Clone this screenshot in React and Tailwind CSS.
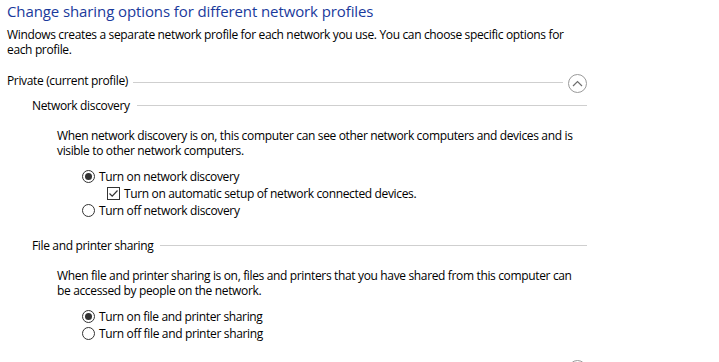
import React from 'react';

const FONT = "font-['Segoe_UI','Open_Sans',sans-serif]";
const BODY = 'whitespace-nowrap text-[12px] leading-[15px] tracking-[-0.35px] text-black';

function Radio({ checked, label }) {
  return (
    <div className="flex h-[17px] items-center">
      <span className="flex h-[13px] w-[13px] items-center justify-center rounded-full border border-[#333333] bg-white">
        {checked && <span className="h-[7px] w-[7px] rounded-full bg-[#333333]" />}
      </span>
      <span className={`ml-[4px] ${BODY}`}>{label}</span>
    </div>
  );
}

function Checkbox({ checked, label }) {
  return (
    <div className="flex h-[17px] items-center pl-[25px]">
      <span className="flex h-[13px] w-[13px] items-center justify-center border border-[#333333] bg-white">
        {checked && (
          <svg width="11" height="11" viewBox="0 0 11 11" fill="none">
            <path d="M1.5 5.5 L4.2 8.2 L9.5 2.5" stroke="#333333" strokeWidth="1.2" />
          </svg>
        )}
      </span>
      <span className={`ml-[4px] ${BODY}`}>{label}</span>
    </div>
  );
}

function ToggleCircle({ up }) {
  return (
    <span className="mt-[1px] flex h-[19px] w-[19px] shrink-0 items-center justify-center rounded-full border border-[#9a9a9a]">
      <svg width="11" height="7" viewBox="0 0 11 7" fill="none">
        <path
          d={up ? 'M1 6 L5.5 1.5 L10 6' : 'M1 1 L5.5 5.5 L10 1'}
          stroke="#6e6e6e"
          strokeWidth="1.2"
        />
      </svg>
    </span>
  );
}

function ProfileHeader({ title, up, textClass = '' }) {
  return (
    <div className="flex items-start">
      <span className={`${BODY} ${textClass}`}>{title}</span>
      <div className="mx-[5px] mt-[9px] h-px flex-1 bg-[#cfcfcf]" />
      <ToggleCircle up={up} />
    </div>
  );
}

function SectionHeader({ title }) {
  return (
    <div className="flex items-start pl-[25px]">
      <span className={BODY}>{title}</span>
      <div className="ml-[7px] mt-[7px] h-px flex-1 bg-[#cfcfcf]" />
    </div>
  );
}

export default function App() {
  return (
    <div className={`h-[362px] w-[719px] overflow-hidden bg-white pl-[7px] ${FONT}`}>
      <div className="w-[580px]">
        {/* Page title */}
        <h1 className="mt-[1px] whitespace-nowrap text-[15px] font-normal leading-[20px] tracking-[-0.1px] text-[#1a3a9c]">
          Change sharing options for different network profiles
        </h1>
        <p className={`mt-[6px] ${BODY}`}>
          Windows creates a separate network profile for each network you use. You can choose specific options for
          <br />
          each profile.
        </p>

        {/* Private profile */}
        <div className="mt-[16px]">
          <ProfileHeader title="Private (current profile)" up />
        </div>

        <div className="mt-[5px]">
          <SectionHeader title="Network discovery" />
          <p className={`mt-[15px] pl-[50px] ${BODY}`}>
            When network discovery is on, this computer can see other network computers and devices and is
            <br />
            visible to other network computers.
          </p>
          <div className="mt-[10px] pl-[75px]">
            <Radio checked label="Turn on network discovery" />
            <Checkbox checked label="Turn on automatic setup of network connected devices." />
            <Radio label="Turn off network discovery" />
          </div>
        </div>

        <div className="mt-[19px]">
          <SectionHeader title="File and printer sharing" />
          <p className={`mt-[15px] pl-[50px] ${BODY}`}>
            When file and printer sharing is on, files and printers that you have shared from this computer can
            <br />
            be accessed by people on the network.
          </p>
          <div className="mt-[10px] pl-[75px]">
            <Radio checked label="Turn on file and printer sharing" />
            <Radio label="Turn off file and printer sharing" />
          </div>
        </div>

        {/* Next profile (collapsed, mostly below the fold) */}
        <div className="mt-[17px]">
          <ProfileHeader title="Guest or Public" textClass="pt-[3px]" />
        </div>
      </div>
    </div>
  );
}
